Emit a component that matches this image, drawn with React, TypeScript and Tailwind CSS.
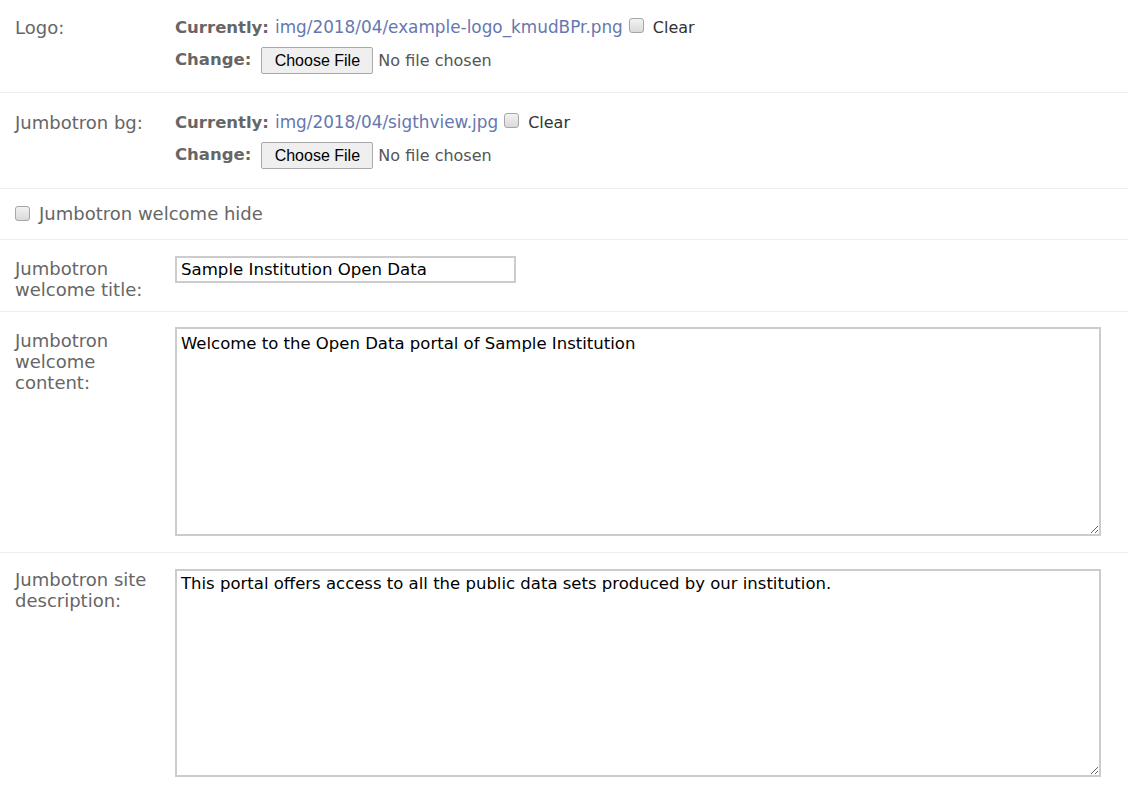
import React from "react";

const font = { fontFamily: '"DejaVu Sans", Verdana, sans-serif' };

function Check() {
  return (
    <span className="inline-block h-[15px] w-[15px] shrink-0 rounded-[3px] border border-[#a6a6a6] bg-gradient-to-b from-[#f2f2f2] to-[#dadada]" />
  );
}

function FileRow({ label, current, pt, pb }: { label: string; current: string; pt: string; pb: string }) {
  return (
    <div className={`flex border-b border-[#eeeeee] px-[15px] ${pt} ${pb}`}>
      <div className="w-[160px] shrink-0 text-[18px] leading-[21px] text-[#666]">{label}</div>
      <div className="flex flex-col gap-[9px]">
        <div className="flex items-center leading-[21px]">
          <span className="text-[16.5px] font-bold text-[#666]">Currently:</span>
          <span className="ml-[6px] text-[16.85px] text-[#6677b0]">{current}</span>
          <span className="ml-[6px]">
            <Check />
          </span>
          <span className="ml-[9px] text-[16px] text-[#333]">Clear</span>
        </div>
        <div className="flex items-center">
          <span className="text-[16.5px] font-bold text-[#666]">Change:</span>
          <span
            className="ml-[10px] flex h-[27px] w-[112px] items-center justify-center rounded-[2px] border border-[#a9a9a9] bg-[#efefef] text-[16px] text-black"
            style={{ fontFamily: '"Liberation Sans", Arial, sans-serif' }}
          >
            Choose File
          </span>
          <span className="ml-[5px] text-[16px] text-[#555]">No file chosen</span>
        </div>
      </div>
    </div>
  );
}

export default function App() {
  return (
    <div className="min-h-[785px] w-[1128px] bg-white text-[16px]" style={font}>
      <FileRow label="Logo:" current="img/2018/04/example-logo_kmudBPr.png" pt="pt-[17px]" pb="pb-[18px]" />
      <FileRow label="Jumbotron bg:" current="img/2018/04/sigthview.jpg" pt="pt-[19px]" pb="pb-[19px]" />
      <div className="flex items-center border-b border-[#eeeeee] px-[15px] pt-[14px] pb-[15px] leading-[21px]">
        <Check />
        <span className="ml-[9px] text-[18px] text-[#666]">Jumbotron welcome hide</span>
      </div>
      <div className="flex border-b border-[#eeeeee] px-[15px] pt-[16px] pb-[11px]">
        <div className="w-[160px] shrink-0 pt-[2px] text-[18px] leading-[21px] text-[#666]">
          Jumbotron
          <br />
          welcome title:
        </div>
        <input
          readOnly
          defaultValue="Sample Institution Open Data"
          className="h-[27px] w-[341px] border-2 border-[#cccccc] px-[4px] text-[16.6px] text-black outline-none"
          style={font}
        />
      </div>
      <div className="flex border-b border-[#eeeeee] px-[15px] pt-[15px] pb-[16px]">
        <div className="w-[160px] shrink-0 pt-[3px] text-[18px] leading-[21px] text-[#666]">
          Jumbotron
          <br />
          welcome
          <br />
          content:
        </div>
        <textarea
          readOnly
          defaultValue="Welcome to the Open Data portal of Sample Institution"
          className="h-[209px] w-[926px] border-2 border-[#cccccc] px-[4px] pt-[4px] text-[16.5px] leading-[21px] text-black outline-none"
          style={font}
        />
      </div>
      <div className="flex px-[15px] pt-[16px] pb-[8px]">
        <div className="w-[160px] shrink-0 text-[18px] leading-[21px] text-[#666]">
          Jumbotron site
          <br />
          description:
        </div>
        <textarea
          readOnly
          defaultValue="This portal offers access to all the public data sets produced by our institution."
          className="h-[208px] w-[926px] border-2 border-[#cccccc] px-[4px] pt-[2px] text-[16.5px] leading-[21px] text-black outline-none"
          style={font}
        />
      </div>
    </div>
  );
}
